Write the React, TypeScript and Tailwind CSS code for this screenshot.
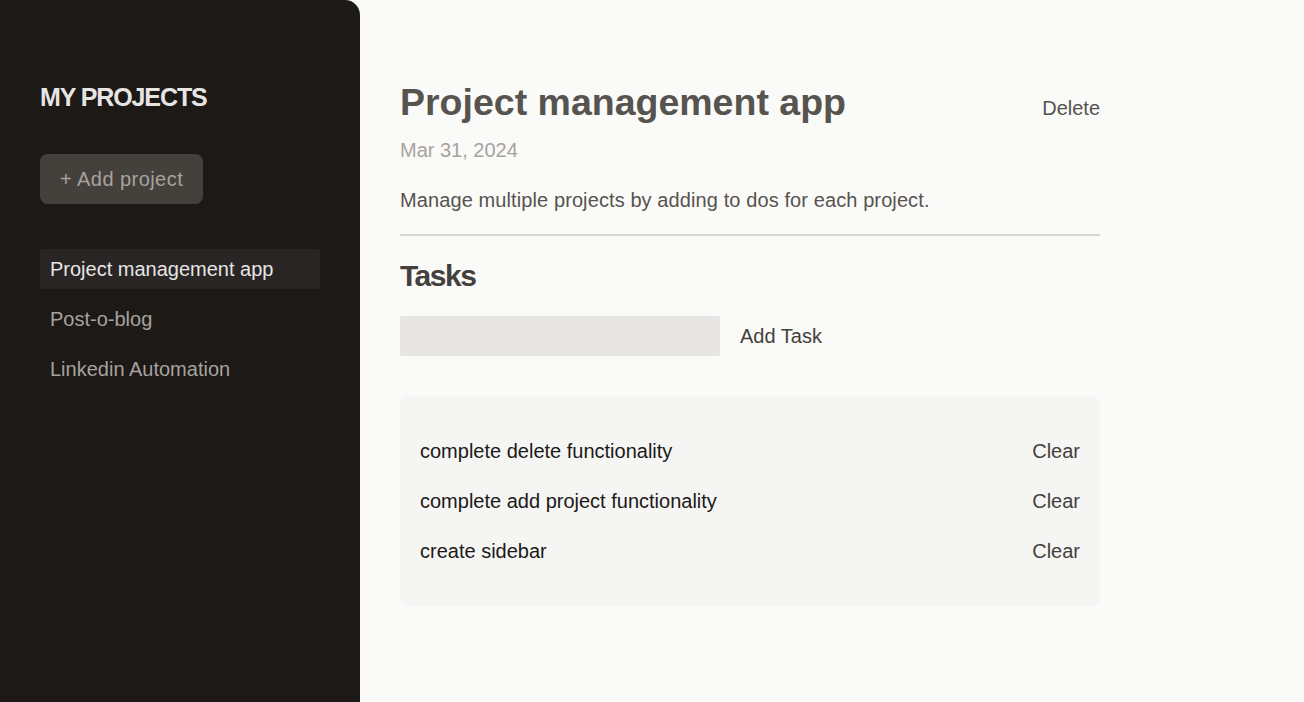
const projects = ["Project management app", "Post-o-blog", "Linkedin Automation"];
const tasks = ["complete delete functionality", "complete add project functionality", "create sidebar"];

export default function App() {
  return (
    <div
      className="flex h-screen gap-[40px] bg-stone-50 overflow-hidden"
      style={{ fontFamily: '"Liberation Sans", Arial, sans-serif' }}
    >
      <aside className="w-[360px] shrink-0 h-[720px] px-[40px] pt-[80px] bg-[#1c1917] text-stone-50 rounded-r-[15px]">
        <h2 className="mb-[39px] font-bold uppercase text-[25px] leading-[35px] tracking-[-1.1px] text-stone-200">My Projects</h2>
        <div>
          <button className="px-[20px] py-[10px] text-[20px] leading-[30px] tracking-[0.45px] rounded-[7.5px] bg-[#44403c] text-[#a8a29e]">
            + Add project
          </button>
        </div>
        <ul className="mt-[40px]">
          {projects.map((p, i) => (
            <li key={p}>
              <button
                className={
                  "w-full text-left px-[10px] py-[5px] my-[5px] rounded-[2.5px] text-[20px] leading-[30px] " +
                  (i === 0 ? "bg-[#292524] text-stone-200" : "text-[#a8a29e]")
                }
              >
                {p}
              </button>
            </li>
          ))}
        </ul>
      </aside>
      <main className="w-[700px] mt-[80px]">
        <header className="pb-[19px] mb-[20px] border-b-2 border-[#d6d3d1]">
          <div className="flex items-center justify-between">
            <h1 className="text-[37.5px] leading-[45px] font-bold text-[#57534e] mb-[10px]">Project management app</h1>
            <button className="text-[20px] leading-[30px] text-[#57534e]">Delete</button>
          </div>
          <p className="mb-[20px] text-[20px] leading-[30px] text-[#a8a29e]">Mar 31, 2024</p>
          <p className="text-[20px] leading-[30px] tracking-[0.1px] text-[#57534e]">Manage multiple projects by adding to dos for each project.</p>
        </header>
        <section>
          <h2 className="text-[30px] leading-[40px] font-bold tracking-[-1.5px] text-[#44403c] mb-[20px]">Tasks</h2>
          <div className="flex items-center gap-[20px]">
            <input className="w-[320px] h-[40px] px-[10px] py-[5px] rounded-[2.5px] bg-[#e7e5e4] text-[20px] outline-none" />
            <button className="text-[20px] leading-[30px] text-[#44403c]">Add Task</button>
          </div>
          <ul className="p-[20px] mt-[40px] rounded-[7.5px] bg-[#f5f5f4]">
            {tasks.map((t) => (
              <li key={t} className="flex justify-between my-[20px] text-[20px] leading-[30px]">
                <span className="text-[#1c1917]">{t}</span>
                <button className="text-[#44403c]">Clear</button>
              </li>
            ))}
          </ul>
        </section>
      </main>
    </div>
  );
}
